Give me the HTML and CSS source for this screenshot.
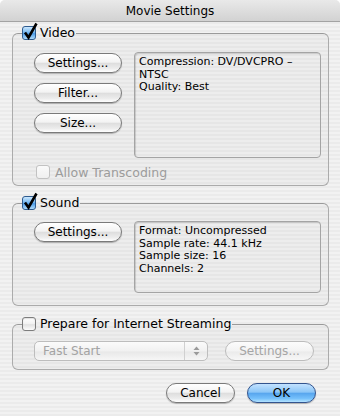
FILE: index.html
```html
<!DOCTYPE html>
<html lang="en">
<head>
    <meta charset="utf-8" />
    <title>Movie Settings</title>
    <link rel="stylesheet" href="styles.css">
</head>
<body>

    <div class="window">
        <div class="titlebar">Movie Settings</div>

        <div class="content">

            <!-- Video group -->
            <fieldset class="group video">
                <legend>
                    <svg class="checkbox" width="14" height="14" viewBox="0 0 14 14">
                        <defs>
                            <linearGradient id="checkBlue" x1="0" y1="0" x2="0" y2="1">
                                <stop offset="0" stop-color="#d4ecff" />
                                <stop offset="0.45" stop-color="#76b8f0" />
                                <stop offset="0.55" stop-color="#4d9be6" />
                                <stop offset="1" stop-color="#b9e3ff" />
                            </linearGradient>
                        </defs>
                        <rect x="0.5" y="0.5" width="13" height="13" rx="2.5" fill="url(#checkBlue)" stroke="#2e5b8e" />
                        <path d="M3 6.5 L6.5 11.5 L14.5 -2.5" fill="none" stroke="#000" stroke-width="2.6" stroke-linejoin="miter" />
                    </svg>
                    <span>Video</span>
                </legend>

                <div class="group-row">
                    <div class="button-column">
                        <div class="button">Settings...</div>
                        <div class="button">Filter...</div>
                        <div class="button">Size...</div>
                    </div>
                    <div class="info-box video-info">
                        Compression: DV/DVCPRO – NTSC<br>
                        Quality: Best
                    </div>
                </div>

                <div class="option disabled">
                    <span class="box-unchecked"></span>
                    <span>Allow Transcoding</span>
                </div>
            </fieldset>

            <!-- Sound group -->
            <fieldset class="group sound">
                <legend>
                    <svg class="checkbox" width="14" height="14" viewBox="0 0 14 14">
                        <rect x="0.5" y="0.5" width="13" height="13" rx="2.5" fill="url(#checkBlue)" stroke="#2e5b8e" />
                        <path d="M3 6.5 L6.5 11.5 L14.5 -2.5" fill="none" stroke="#000" stroke-width="2.6" stroke-linejoin="miter" />
                    </svg>
                    <span>Sound</span>
                </legend>

                <div class="group-row">
                    <div class="button-column">
                        <div class="button">Settings...</div>
                    </div>
                    <div class="info-box sound-info">
                        Format: Uncompressed<br>
                        Sample rate: 44.1 kHz<br>
                        Sample size: 16<br>
                        Channels: 2
                    </div>
                </div>
            </fieldset>

            <!-- Streaming group -->
            <fieldset class="group streaming">
                <legend>
                    <span class="box-unchecked"></span>
                    <span>Prepare for Internet Streaming</span>
                </legend>

                <div class="stream-row">
                    <div class="popup">
                        <span class="popup-label">Fast Start</span>
                        <span class="popup-arrows">
                            <svg width="7" height="10" viewBox="0 0 7 10">
                                <path d="M3.5 0.5 L6.5 4 L0.5 4 Z" fill="#9a9a9a" />
                                <path d="M3.5 9.5 L6.5 6 L0.5 6 Z" fill="#9a9a9a" />
                            </svg>
                        </span>
                    </div>
                    <div class="button button-disabled">Settings...</div>
                </div>
            </fieldset>

            <!-- Dialog buttons -->
            <div class="dialog-buttons">
                <div class="button cancel">Cancel</div>
                <div class="button default">OK</div>
            </div>

        </div>
    </div>

</body>
</html>
```

FILE: styles.css
```css
/* Page and window frame */
body {
    margin: 0;
    background: #ffffff;
    font-family: "DejaVu Sans", "Lucida Grande", sans-serif;
    font-size: 12px;
    color: #000;
}

.window {
    width: 340px;
    height: 416px;
    overflow: hidden;
    border-radius: 5px 5px 0 0;
    background: repeating-linear-gradient(#f2f2f2 0 2px, #ebebeb 2px 4px);
}

/* Title bar */
.titlebar {
    height: 21px;
    line-height: 22px;
    text-align: center;
    font-size: 12px;
    background: linear-gradient(#e9e9e9, #d2d2d2);
    border-bottom: 1px solid #a3a3a3;
}

.content {
    padding: 0 11px 0 12px;
}

/* Group boxes */
.group {
    margin: 0;
    padding: 0 6px 0 9px;
    min-width: 0;
    border: 1px solid #ababab;
    border-top-color: #9a9a9a;
    border-radius: 6px;
    background: rgba(0, 0, 0, 0.018);
}

.group legend {
    display: flex;
    align-items: center;
    gap: 4px;
    height: 14px;
    margin: 0;
    padding: 0 1px 0 0;
    line-height: 14px;
    font-size: 12.5px;
}

.video {
    margin-top: 4px;
    padding-top: 12px;
    padding-bottom: 6px;
}

.sound {
    margin-top: 10px;
    padding-top: 11px;
    padding-bottom: 12px;
}

.streaming {
    margin-top: 11px;
    padding-top: 10px;
    padding-bottom: 8px;
}

.checkbox {
    overflow: visible;
    flex: none;
}

.box-unchecked {
    display: inline-block;
    flex: none;
    width: 12px;
    height: 12px;
    border: 1px solid #7d7d7d;
    border-radius: 3px;
    background: linear-gradient(#ffffff, #f1f1f1 50%, #e2e2e2 55%, #fbfbfb);
    box-shadow: inset 0 1px 1px rgba(0, 0, 0, 0.12);
}

/* Buttons + info box row */
.group-row {
    display: flex;
    gap: 12px;
    margin-left: 12px;
}

.button-column {
    display: flex;
    flex-direction: column;
    gap: 10px;
    margin-top: 1px;
}

.button {
    box-sizing: border-box;
    width: 88px;
    height: 20px;
    line-height: 18px;
    text-align: center;
    border: 1px solid #7a7a7a;
    border-radius: 10px;
    background: linear-gradient(#ffffff, #f3f3f3 45%, #dedede 52%, #ececec 80%, #ffffff);
    box-shadow: 0 1px 1px rgba(0, 0, 0, 0.25);
}

.info-box {
    box-sizing: border-box;
    width: 187px;
    padding: 3px 4px;
    font-size: 11px;
    line-height: 12.7px;
    border: 1px solid #a4a4a4;
    border-radius: 4px;
    box-shadow: inset 1px 1px 1px rgba(0, 0, 0, 0.15);
}

.video-info {
    height: 106px;
}

.sound-info {
    height: 72px;
}

/* Allow Transcoding */
.option {
    display: flex;
    align-items: center;
    gap: 5px;
    height: 14px;
    margin: 7px 0 0 14px;
    font-size: 12.5px;
}

.option.disabled {
    color: #9c9c9c;
}

.option.disabled .box-unchecked {
    border-color: #c2c2c2;
    box-shadow: none;
    background: linear-gradient(#fafafa, #f0f0f0);
}

/* Streaming controls */
.stream-row {
    display: flex;
    align-items: center;
    gap: 17px;
    margin-left: 12px;
}

.popup {
    box-sizing: border-box;
    display: flex;
    align-items: center;
    width: 174px;
    height: 20px;
    border: 1px solid #bdbdbd;
    border-radius: 5px;
    background: linear-gradient(#fbfbfb, #f1f1f1 50%, #e8e8e8 55%, #f6f6f6);
    color: #a3a3a3;
}

.popup-label {
    flex: 1;
    padding-left: 8px;
}

.popup-arrows {
    display: flex;
    align-items: center;
    justify-content: center;
    width: 22px;
    height: 100%;
    border-left: 1px solid #d0d0d0;
}

.button-disabled {
    width: 89px;
    color: #a5a5a5;
    border-color: #bcbcbc;
    background: linear-gradient(#fcfcfc, #f3f3f3 50%, #ebebeb 55%, #f7f7f7);
    box-shadow: none;
}

/* OK / Cancel */
.dialog-buttons {
    display: flex;
    justify-content: flex-end;
    gap: 12px;
    margin-top: 13px;
    padding-right: 13px;
}

.cancel {
    width: 69px;
}

.default {
    width: 69px;
    border-color: #33548e;
    background: linear-gradient(#c3e2ff, #8cc6f7 45%, #58a6ee 52%, #75c0fb 80%, #b4e3ff);
}
```
